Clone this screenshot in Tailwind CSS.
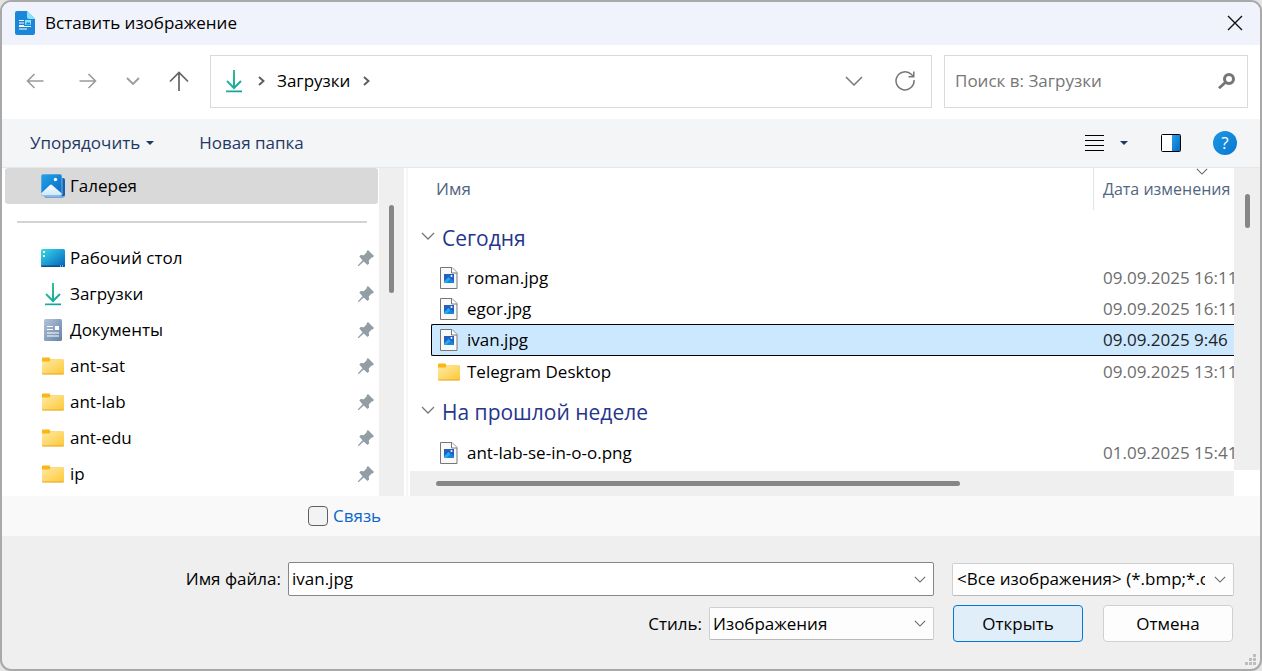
<!DOCTYPE html>
<html lang="ru">
<head>
<meta charset="utf-8">
<meta name="viewport" content="width=device-width, initial-scale=1">
<title>Вставить изображение</title>
<script src="https://cdn.jsdelivr.net/npm/@tailwindcss/browser@4"></script>
</head>
<body class="bg-[#e4e4e4] font-['Open_Sans','Noto_Sans',sans-serif] text-[17px] leading-6 text-black">

<svg class="absolute size-0" aria-hidden="true">
  <defs>
    <linearGradient id="gDown" x1="0" y1="0" x2="18" y2="24" gradientUnits="userSpaceOnUse"><stop offset="0" stop-color="#38cb83"/><stop offset="1" stop-color="#0f9ba8"/></linearGradient>
    <linearGradient id="gFolder" x1="0" y1="0" x2="1" y2="1"><stop offset="0" stop-color="#ffe9a3"/><stop offset="1" stop-color="#fdc937"/></linearGradient>
    <linearGradient id="gDesk" x1="0" y1="0" x2="1" y2="1"><stop offset="0" stop-color="#36dbe8"/><stop offset="1" stop-color="#0560bb"/></linearGradient>
    <linearGradient id="gBlue" x1="0" y1="0" x2="1" y2="1"><stop offset="0" stop-color="#23a3ea"/><stop offset="1" stop-color="#0669c4"/></linearGradient>
    <linearGradient id="gDoc" x1="0" y1="0" x2="1" y2="1"><stop offset="0" stop-color="#b3c4d9"/><stop offset="1" stop-color="#6482a6"/></linearGradient>
    <linearGradient id="gHill" x1="0" y1="0" x2="0" y2="1"><stop offset="0" stop-color="#fff"/><stop offset="1" stop-color="#cfe6fa"/></linearGradient>
  </defs>
  <symbol id="download" viewBox="0 0 18 24">
    <path d="M9 1v18M2 12l7 7 7-7" fill="none" stroke="url(#gDown)" stroke-width="2"/>
    <path d="M1 21.500h16v1.700H1z" fill="url(#gDown)"/>
  </symbol>
  <symbol id="folder" viewBox="0 0 24 18">
    <path d="M1 1.500Q1 .5 2 .5h6q.8 0 1 1l.3 1H22q1 0 1 1V9H1z" fill="#fbb615"/>
    <path d="M1 4.500h7.500l1-1.500H22q1 0 1 1v12.500q0 .8-1 .8H2q-1 0-1-.8z" fill="url(#gFolder)"/>
    <path d="M1 16.500h22q0 1-1 1H2q-1 0-1-1z" fill="#e9a425"/>
  </symbol>
  <symbol id="pin" viewBox="0 0 16 16">
    <path d="M10 0l6 6-1 1.300-1.300.2-2.900 2.900.3 3-1.600 1.600-3.800-3.600L.8 16H0v-.8l4.500-4.900L1.300 6.500l1.500-1.400 3 .2L8.500 2.500l.2-1.200z" fill="#929da4"/>
  </symbol>
  <symbol id="picfile" viewBox="0 0 18 22">
    <path d="M1 .500h11l5 5v16H.5V.5z" fill="#f9f9f9" stroke="#777"/>
    <path d="M11.500.5v5.500H17" fill="#fff" stroke="#777"/>
    <path d="M4 7h10v9H4z" fill="#2460c0"/>
    <path d="M4 16v-1.500l4.500-4.500L14 15.500v.5z" fill="#27a9f3"/>
    <path d="M6.500 16L11 11.500l3 3V16z" fill="#1386df"/>
    <circle cx="11.500" cy="9" r="1" fill="#fff"/>
  </symbol>
  <symbol id="chev" viewBox="0 0 14 8"><path d="M1 1l6 6 6-6" fill="none" stroke="currentColor" stroke-width="1.300"/></symbol>
</svg>

<main role="dialog" aria-labelledby="title" class="flex h-screen flex-col overflow-hidden rounded-[11px] border-2 border-[#a9a9a9] bg-[#efefef]">

  <header class="flex h-[43px] shrink-0 items-center bg-[#f0f3fb] pr-[13px] pb-0.5 pl-[13px]">
    <svg class="h-6 w-5" viewBox="0 0 20 24" aria-hidden="true">
      <path d="M2 0h10l8 8v14q0 2-2 2H2q-2 0-2-2V2q0-2 2-2z" fill="#1b87d8"/>
      <path d="M12 0l8 8h-6q-2 0-2-2z" fill="#86e3fb"/>
      <path d="M4 9.500h5M4 12h5M4 14.500h5M4 15.500h12M4 18h8" stroke="#fff"/>
      <path d="M10 9h6v5h-6z" fill="#86e3fb"/><path d="M10.500 13.500l2-2.500 1 1 1-1 1 2.500z" fill="#1b87d8"/>
    </svg>
    <h1 id="title" class="ml-[10px] flex-1">Вставить изображение</h1>
    <button type="button" aria-label="Закрыть" class="grid size-6 place-items-center">
      <svg class="size-4" viewBox="0 0 16 16"><path d="M1 1l14 14M15 1L1 15" stroke="#111" stroke-width="1.400"/></svg>
    </button>
  </header>

  <nav class="flex h-[74px] shrink-0 items-center bg-white pr-3 pb-0.5 pl-5" aria-label="Навигация">
    <button type="button" aria-label="Назад" class="mr-[27px] grid h-8 w-[26px] place-items-center text-[#9b9b9b]">
      <svg class="h-4 w-[18px]" viewBox="0 0 18 16"><path d="M17.500 8H1.500M8.500 1l-7 7 7 7" fill="none" stroke="currentColor" stroke-width="1.600"/></svg>
    </button>
    <button type="button" aria-label="Вперёд" class="mr-[19px] grid h-8 w-[26px] place-items-center text-[#9b9b9b]">
      <svg class="h-4 w-[18px]" viewBox="0 0 18 16"><path d="M.5 8h16M9.500 1l7 7-7 7" fill="none" stroke="currentColor" stroke-width="1.600"/></svg>
    </button>
    <button type="button" aria-label="Последние расположения" class="mr-5 grid h-8 w-[26px] place-items-center text-[#9b9b9b]">
      <svg class="h-2 w-[14px]" viewBox="0 0 14 8"><path d="M1 1l6 6 6-6" fill="none" stroke="currentColor" stroke-width="1.800"/></svg>
    </button>
    <button type="button" aria-label="Вверх" class="mr-[18px] grid h-8 w-[26px] place-items-center text-[#636363]">
      <svg class="h-5 w-5" viewBox="0 0 20 20"><path d="M10 20V1.500M1 10.500l9-9 9 9" fill="none" stroke="currentColor" stroke-width="1.700"/></svg>
    </button>
    <div class="flex h-[53px] flex-1 items-center border border-[#d9d9d9] pr-4 pl-[14px]">
      <svg class="h-6 w-[18px]" aria-hidden="true"><use href="#download"/></svg>
      <svg class="ml-[15px] h-[10px] w-[7px]" viewBox="0 0 7 10" aria-hidden="true"><path d="M1 1l4.500 4L1 9" fill="none" stroke="#5c5c5c" stroke-width="1.900"/></svg>
      <a href="#" class="ml-3">Загрузки</a>
      <svg class="ml-[13px] h-[10px] w-[7px]" viewBox="0 0 7 10" aria-hidden="true"><path d="M1 1l4.500 4L1 9" fill="none" stroke="#5c5c5c" stroke-width="1.900"/></svg>
      <button type="button" aria-label="Предыдущие расположения" class="mr-8 ml-auto text-[#777]">
        <svg class="h-[10px] w-[18px]" viewBox="0 0 18 10"><path d="M1 1l8 8 8-8" fill="none" stroke="currentColor" stroke-width="1.500"/></svg>
      </button>
      <button type="button" aria-label="Обновить" class="text-[#777]">
        <svg class="size-5" viewBox="0 0 20 20"><path d="M19 9A9 9 0 1 1 16.500 3.600L18.500 5.600M18.800.5v5.200h-5.300" fill="none" stroke="currentColor" stroke-width="1.500"/></svg>
      </button>
    </div>
    <label class="ml-3 flex h-[53px] w-[304px] items-center border border-[#d9d9d9] pr-3 pl-[10px]">
      <input type="search" aria-label="Поиск" placeholder="Поиск в: Загрузки" class="min-w-0 flex-1 outline-none placeholder:text-[#767676]">
      <svg class="h-4 w-[17px]" viewBox="0 0 17 16" aria-hidden="true"><circle cx="11" cy="6" r="4.500" fill="none" stroke="#757575" stroke-width="3"/><path d="M7.500 9.200L1 15.200" stroke="#757575" stroke-width="2.800"/></svg>
    </label>
  </nav>

  <div class="flex h-[49px] shrink-0 items-center border-b border-[#e6e8ea] bg-[#f4f5f7] pr-[23px] pl-7 text-[#1f3864]">
    <button type="button" class="flex items-center gap-1.5">Упорядочить
      <svg class="h-1 w-2" viewBox="0 0 8 4" aria-hidden="true"><path d="M0 0h8L4 4z" fill="#1f3864"/></svg>
    </button>
    <button type="button" class="ml-[45px]">Новая папка</button>
    <button type="button" aria-label="Вид" class="ml-auto flex items-center gap-4">
      <svg class="h-[18px] w-[19px]" viewBox="0 0 19 18"><path d="M0 1.500h19M0 6.500h19M0 11.500h19M0 16.500h19" stroke="#000"/></svg>
      <svg class="h-1 w-2" viewBox="0 0 8 4"><path d="M0 0h8L4 4z" fill="#1f3864"/></svg>
    </button>
    <button type="button" aria-label="Область просмотра" class="ml-8">
      <svg class="h-[19px] w-[22px]" viewBox="0 0 22 19"><rect x="1.500" y=".5" width="19" height="17" rx="1" fill="#fff"/><path d="M12 1h8v16h-8z" fill="url(#gBlue)"/><rect x="1.500" y=".5" width="19" height="17" rx="1" fill="none" stroke="#000"/></svg>
    </button>
    <button type="button" aria-label="Справка" class="ml-[31px] grid size-6 place-items-center rounded-full bg-linear-to-br from-[#1e97e4] to-[#0877d0] text-white">?</button>
  </div>

  <div class="flex min-h-0 flex-1 bg-white">
    <aside class="w-[377px] shrink-0 overflow-hidden pl-[3px]">
      <a href="#" class="mr-px flex h-9 items-center rounded-[3px] bg-[#d9d9d9] pl-9">
        <svg class="h-6 w-6" viewBox="0 0 24 24" aria-hidden="true">
          <path d="M5 4h17q2 0 2 2v15q0 2-2 2H6q-2 0-2-1z" fill="#1262b3"/><path d="M3 22h20v1q-1 1-2 1H5q-2 0-2-2z" fill="#6ba5dc"/>
          <rect width="21" height="22" rx="2" fill="url(#gBlue)" stroke="#d9d9d9" stroke-width=".6"/>
          <path d="M0 19.500l9-8.500q1-1 2 0l9.800 8.500q0 2-2 2H2q-2 0-2-2z" fill="url(#gHill)"/><circle cx="14.500" cy="5.500" r="1.700" fill="#fff"/>
        </svg>
        <span class="ml-[5px]">Галерея</span>
      </a>
      <hr class="mt-[17px] mr-3 mb-[17px] ml-3 border-t-2 border-[#d3d3d3]">
      <ul>
        <li><a href="#" class="flex h-9 items-center pr-[5px] pl-9">
          <svg class="h-[18px] w-6" viewBox="0 0 24 18" aria-hidden="true"><rect width="24" height="18" rx="1.500" fill="url(#gDesk)"/><path d="M0 16.500h24q0 1.500-1 1.500H1q-1 0-1-1.500z" fill="#0a4f86"/><path d="M2 2h2v2H2zM2 6h2v2H2zM19 16.500h1v1h-1zM21 16.500h1v1h-1z" fill="#fff"/></svg>
          <span class="ml-[5px] flex-1">Рабочий стол</span><svg class="size-4" aria-hidden="true"><use href="#pin"/></svg></a></li>
        <li><a href="#" class="flex h-9 items-center pr-[5px] pl-9">
          <svg class="mx-[3px] h-6 w-[18px]" aria-hidden="true"><use href="#download"/></svg>
          <span class="ml-[5px] flex-1">Загрузки</span><svg class="size-4" aria-hidden="true"><use href="#pin"/></svg></a></li>
        <li><a href="#" class="flex h-9 items-center pr-[5px] pl-9">
          <svg class="mx-[3px] h-6 w-[18px]" viewBox="0 0 18 24" aria-hidden="true"><rect y="1" width="18" height="22" rx="1.500" fill="url(#gDoc)"/><path d="M3 8.500h6M3 11.500h6M3 15h12M3 18h12" stroke="#fff" stroke-width="1.200"/><path d="M11 8h4v4h-4z" fill="#fff"/></svg>
          <span class="ml-[5px] flex-1">Документы</span><svg class="size-4" aria-hidden="true"><use href="#pin"/></svg></a></li>
        <li><a href="#" class="flex h-9 items-center pr-[5px] pl-9"><svg class="h-[18px] w-6" aria-hidden="true"><use href="#folder"/></svg><span class="ml-[5px] flex-1">ant-sat</span><svg class="size-4" aria-hidden="true"><use href="#pin"/></svg></a></li>
        <li><a href="#" class="flex h-9 items-center pr-[5px] pl-9"><svg class="h-[18px] w-6" aria-hidden="true"><use href="#folder"/></svg><span class="ml-[5px] flex-1">ant-lab</span><svg class="size-4" aria-hidden="true"><use href="#pin"/></svg></a></li>
        <li><a href="#" class="flex h-9 items-center pr-[5px] pl-9"><svg class="h-[18px] w-6" aria-hidden="true"><use href="#folder"/></svg><span class="ml-[5px] flex-1">ant-edu</span><svg class="size-4" aria-hidden="true"><use href="#pin"/></svg></a></li>
        <li><a href="#" class="flex h-9 items-center pr-[5px] pl-9"><svg class="h-[18px] w-6" aria-hidden="true"><use href="#folder"/></svg><span class="ml-[5px] flex-1">ip</span><svg class="size-4" aria-hidden="true"><use href="#pin"/></svg></a></li>
      </ul>
    </aside>
    <div class="w-[25px] shrink-0 bg-[#efefef] pt-[37px]"><div class="mx-auto h-[88px] w-[5px] rounded-full bg-[#868686]"></div></div>
    <div class="mr-0.5 ml-0.5 w-0.5 shrink-0 bg-[#f6f6f6]"></div>

    <section class="flex min-w-0 flex-1 flex-col" aria-label="Файлы">
      <div class="min-h-0 flex-1 overflow-hidden">
        <table class="w-full table-fixed border-separate border-spacing-0 text-left whitespace-nowrap">
          <colgroup><col class="w-[21px]"><col><col class="w-[141px]"></colgroup>
          <thead>
            <tr class="h-[42px] text-[#52667f]">
              <th></th>
              <th class="p-0 pl-[5px] font-normal">Имя</th>
              <th class="relative border-l border-[#e3e3e3] p-0 pl-[9px] text-base font-normal"><svg class="absolute top-0 left-[102px] h-[7px] w-3 text-[#666]" aria-hidden="true"><use href="#chev"/></svg>Дата изменения</th>
            </tr>
          </thead>
          <tbody>
            <tr class="h-[52px] text-[21px] text-[#26358c]"><th colspan="3" class="p-0 pt-[3px] pl-[11px] font-normal"><button type="button" class="flex items-center gap-[7px]"><svg class="mb-1 h-2 w-[14px] text-[#777]" aria-hidden="true"><use href="#chev"/></svg>Сегодня</button></th></tr>
            <tr class="h-[31px]"><td></td><td class="p-0 pl-1.5"><span class="flex items-center gap-1.5"><span class="grid w-6 place-items-center"><svg class="h-[22px] w-[18px]" aria-hidden="true"><use href="#picfile"/></svg></span>roman.jpg</span></td><td class="p-0 pl-[10px] text-[#6d6d6d]">09.09.2025 16:11</td></tr>
            <tr class="h-[31px]"><td></td><td class="p-0 pl-1.5"><span class="flex items-center gap-1.5"><span class="grid w-6 place-items-center"><svg class="h-[22px] w-[18px]" aria-hidden="true"><use href="#picfile"/></svg></span>egor.jpg</span></td><td class="p-0 pl-[10px] text-[#6d6d6d]">09.09.2025 16:11</td></tr>
            <tr class="h-8" aria-selected="true"><td></td><td class="rounded-l-[2px] border-y border-l border-black bg-[#cce8ff] p-0 pl-[5px]"><span class="flex items-center gap-1.5"><span class="grid w-6 place-items-center"><svg class="h-[22px] w-[18px]" aria-hidden="true"><use href="#picfile"/></svg></span>ivan.jpg</span></td><td class="border-y border-black bg-[#cce8ff] p-0 pl-[10px] text-[#222]">09.09.2025 9:46</td></tr>
            <tr class="h-[31px]"><td></td><td class="p-0 pl-1.5"><span class="flex items-center gap-1.5"><svg class="h-[18px] w-6" aria-hidden="true"><use href="#folder"/></svg>Telegram Desktop</span></td><td class="p-0 pl-[10px] text-[#6d6d6d]">09.09.2025 13:11</td></tr>
            <tr class="h-[50px] text-[21px] text-[#26358c]"><th colspan="3" class="p-0 pl-[11px] font-normal"><button type="button" class="flex items-center gap-[7px]"><svg class="mb-1 h-2 w-[14px] text-[#777]" aria-hidden="true"><use href="#chev"/></svg>На прошлой неделе</button></th></tr>
            <tr class="h-[31px]"><td></td><td class="p-0 pl-1.5"><span class="flex items-center gap-1.5"><span class="grid w-6 place-items-center"><svg class="h-[22px] w-[18px]" aria-hidden="true"><use href="#picfile"/></svg></span>ant-lab-se-in-o-o.png</span></td><td class="p-0 pl-[10px] text-[#6d6d6d]">01.09.2025 15:41</td></tr>
          </tbody>
        </table>
      </div>
      <div class="flex h-[25px] shrink-0 items-center bg-[#efefef] pl-[26px]"><div class="h-[5px] w-[524px] rounded-full bg-[#868686]"></div></div>
    </section>
    <div class="mb-[26px] w-[26px] shrink-0 bg-[#efefef] pt-[26px]"><div class="mx-auto h-[34px] w-[5px] rounded-full bg-[#868686]"></div></div>
  </div>

  <div class="flex h-10 shrink-0 items-center bg-[#f9f9f9] pl-[306px]">
    <label class="flex items-center gap-[5px] text-[#0a66cc]"><input type="checkbox" class="size-5 appearance-none rounded-[4px] border border-[#5f5f5f] bg-[#f3f3f3]">Связь</label>
  </div>

  <form class="relative flex h-[133px] shrink-0 flex-col gap-[9px] pt-[26px] pr-[26px]">
    <div class="flex items-center">
      <label for="fname" class="w-[279px] text-right">Имя файла:</label>
      <div class="ml-[7px] flex h-[34px] flex-1 items-center rounded-[2px] border border-[#868686] bg-white pr-[7px] pl-[3px]">
        <input id="fname" type="text" value="ivan.jpg" class="min-w-0 flex-1 outline-none">
        <button type="button" aria-label="Показать список" class="text-[#666]"><svg class="h-[7px] w-3"><use href="#chev"/></svg></button>
      </div>
      <div class="relative ml-[18px] w-[282px]">
        <select aria-label="Тип файлов" class="h-[33px] w-full appearance-none rounded-[2px] border border-[#cfcfcf] border-b-[#b9b9b9] bg-[#fdfdfd] pr-7 pl-1"><option>&lt;Все изображения&gt; (*.bmp;*.cgm;*.emf)</option></select>
        <svg class="pointer-events-none absolute top-[13px] right-2 h-[7px] w-3 text-[#666]" aria-hidden="true"><use href="#chev"/></svg>
      </div>
    </div>
    <div class="flex items-center justify-end pr-px">
      <label for="style">Стиль:</label>
      <div class="relative ml-[7px] w-[225px]">
        <select id="style" class="h-[33px] w-full appearance-none rounded-[2px] border border-[#cfcfcf] border-b-[#b9b9b9] bg-[#fdfdfd] pr-7 pl-[3px]"><option>Изображения</option></select>
        <svg class="pointer-events-none absolute top-[13px] right-2 h-[7px] w-3 text-[#666]" aria-hidden="true"><use href="#chev"/></svg>
      </div>
      <button type="submit" class="ml-[19px] h-[37px] w-[130px] rounded-[4px] border border-[#0078d4] bg-[#e0eef9]">Открыть</button>
      <button type="button" class="ml-5 h-[37px] w-[130px] rounded-[4px] border border-[#d0d0d0] bg-[#fdfdfd]">Отмена</button>
    </div>
    <svg class="absolute right-1 bottom-1 size-[11px]" viewBox="0 0 11 11" aria-hidden="true"><path d="M8 0h3v3H8zM4 4h3v3H4zM8 4h3v3H8zM0 8h3v3H0zM4 8h3v3H4zM8 8h3v3H8z" fill="#bdbdbd"/></svg>
  </form>
</main>
</body>
</html>
